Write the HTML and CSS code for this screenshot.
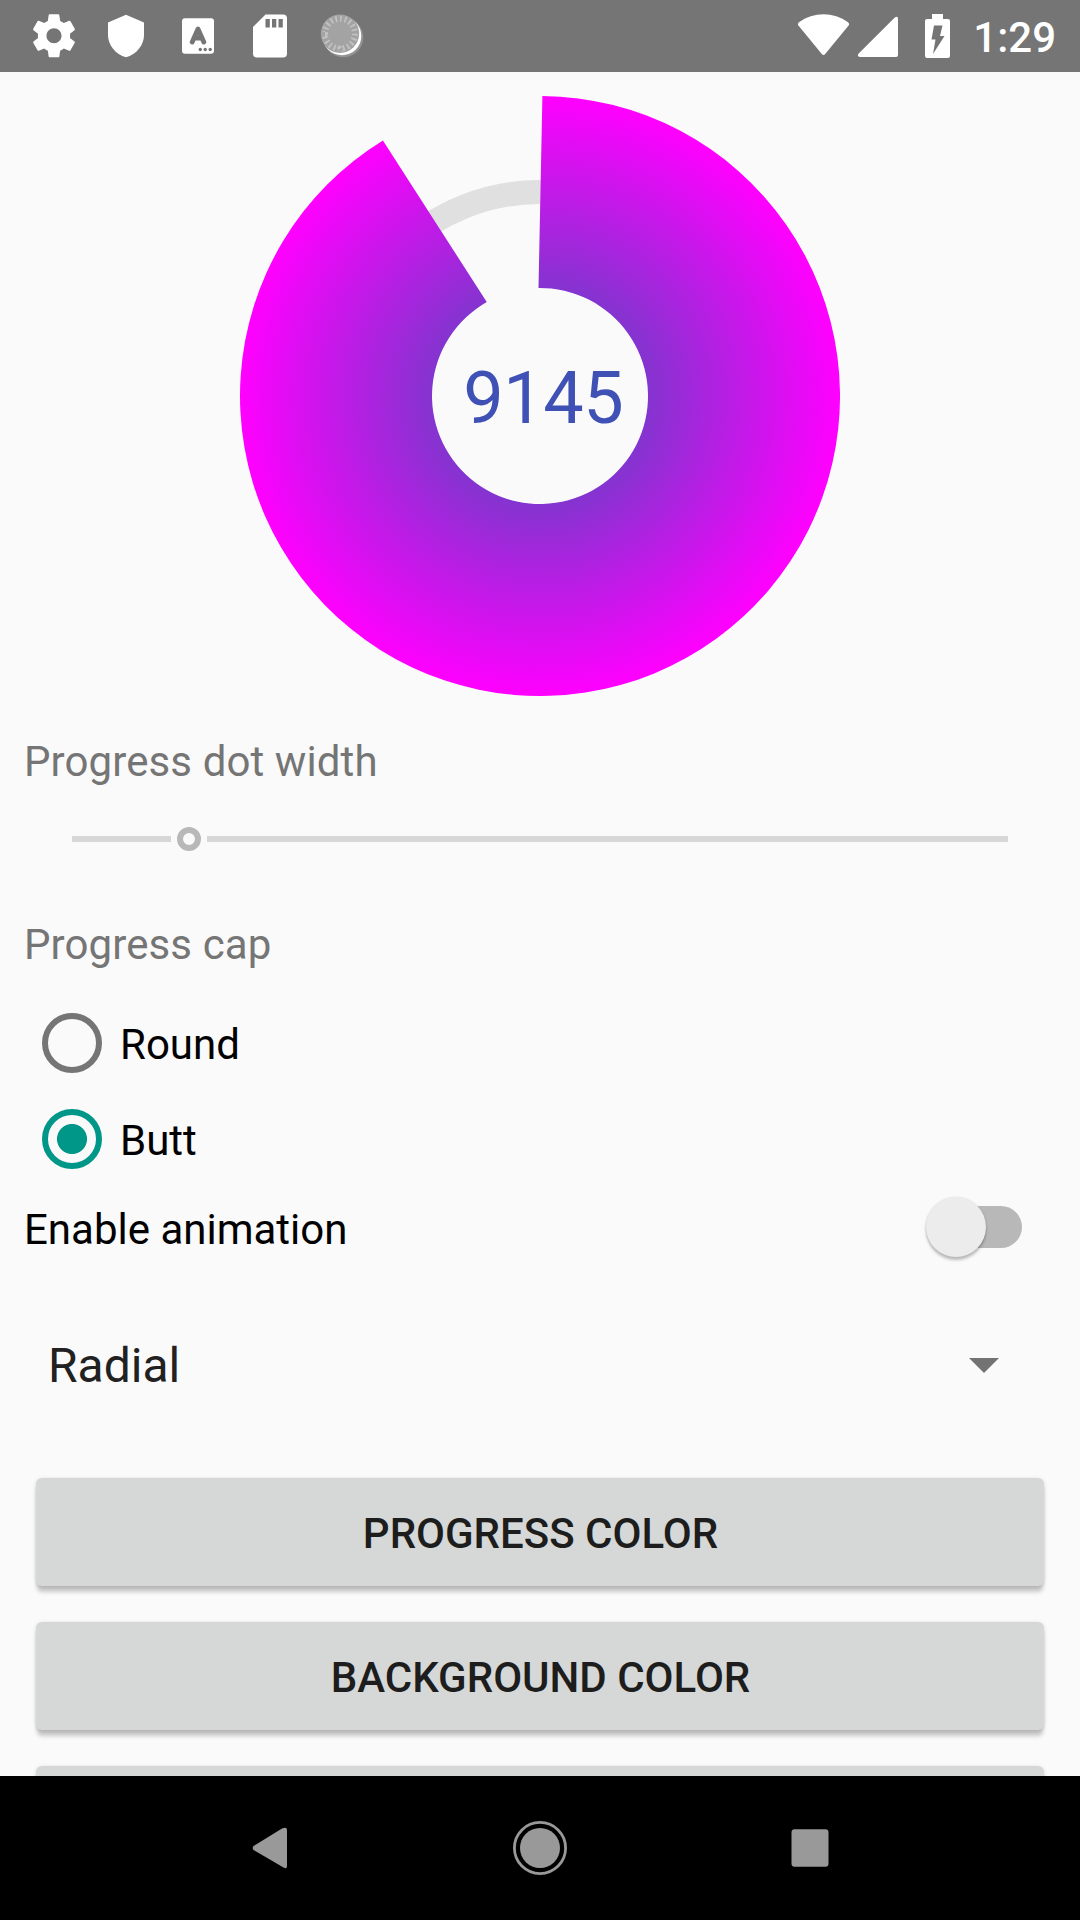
FILE: index.html
```html
<!DOCTYPE html>
<html lang="en">
<head>
<meta charset="utf-8">
<title>Circular progress</title>
<link rel="stylesheet" href="styles.css">
</head>
<body>
<div class="screen">
  <header class="status">
    <svg class="status-icon" viewBox="0 0 72 72"><path transform="translate(10.2 10) scale(2.15)" d="M19.43 12.98c.04-.32.07-.64.07-.98s-.03-.66-.07-.98l2.11-1.65c.19-.15.24-.42.12-.64l-2-3.46c-.12-.22-.39-.3-.61-.22l-2.49 1c-.52-.4-1.08-.73-1.69-.98l-.38-2.65C14.46 2.18 14.25 2 14 2h-4c-.25 0-.46.18-.49.42l-.38 2.65c-.61.25-1.17.59-1.69.98l-2.49-1c-.23-.09-.49 0-.61.22l-2 3.46c-.13.22-.07.49.12.64l2.11 1.65c-.04.32-.07.65-.07.98s.03.66.07.98l-2.11 1.65c-.19.15-.24.42-.12.64l2 3.46c.12.22.39.3.61.22l2.49-1c.52.4 1.08.73 1.69.98l.38 2.65c.03.24.24.42.49.42h4c.25 0 .46-.18.49-.42l.38-2.65c.61-.25 1.17-.59 1.69-.98l2.49 1c.23.09.49 0 .61-.22l2-3.46c.12-.22.07-.49-.12-.64l-2.11-1.65zM12 15.5c-1.930 0-3.500-1.570-3.500-3.500s1.570-3.500 3.500-3.500 3.500 1.570 3.500 3.500-1.570 3.500-3.500 3.500z"/></svg>
    <svg class="status-icon" viewBox="0 0 72 72"><path d="M36 14.700 54 22.500V35c0 10-7.500 19.500-18 22.300C25.500 54.500 18 45 18 35V22.500Z"/></svg>
    <svg class="status-icon" viewBox="0 0 72 72"><rect x="20" y="18.300" width="32" height="35.500" rx="3"/><path class="cut-line" d="M30.200 42 36 29 41.800 42M32.500 38H39.500"/><g class="cut"><circle cx="38.300" cy="49.500" r="1.700"/><circle cx="43.200" cy="49.500" r="1.700"/><circle cx="48.200" cy="49.500" r="1.700"/></g></svg>
    <svg class="status-icon" viewBox="0 0 72 72"><path d="M31.500 14.500H49a4 4 0 0 1 4 4V53.500a4 4 0 0 1-4 4H23a4 4 0 0 1-4-4V27Z"/><path class="cut" d="M31.500 19h4.300v8.500h-4.300zM38 19h4.300v8.500H38zM44.500 19h4.300v8.500h-4.300z"/></svg>
    <svg class="status-icon" viewBox="0 0 72 72"><circle cx="37.300" cy="37.300" r="20" fill="#939393"/><circle cx="36" cy="36" r="19.300" fill="#fff"/><circle cx="34" cy="33.700" r="19.200" fill="#a3a3a3"/><circle class="ticks" cx="34" cy="33.700" r="15" pathLength="80"/></svg>
    <span class="spacer"></span>
    <svg class="signals" viewBox="790 0 170 72"><path d="M798.400 25.500C797.600 24.500 797.900 23.200 799 22.300 806 17 815 14.200 823.500 14.200S841 17 848 22.300C849.100 23.200 849.400 24.500 848.600 25.500L825.200 54Q823.500 56 821.800 54Z"/><path d="M858.700 53.500 894.500 17.700Q898 15.500 898 19V55Q898 57 896 57H860Q856.500 56.500 858.700 53.500Z"/><path d="M932 14h11v5h5a2 2 0 0 1 2 2v35a2 2 0 0 1-2 2h-21a2 2 0 0 1-2-2V21a2 2 0 0 1 2-2h5z"/><path class="cut" d="M934 25.500h8.500L940 36h4.500L933 54l2.500-14.500H931.500z"/></svg>
    <span class="clock">1:29</span>
  </header>

  <main class="content">
    <svg class="gauge" viewBox="0 0 600 600">
      <defs><radialGradient id="ring" gradientUnits="userSpaceOnUse" cx="300" cy="300" r="300"><stop offset="0" stop-color="#3f51b5"/><stop offset="1" stop-color="#f0f"/></radialGradient></defs>
      <circle class="gauge-track" cx="300" cy="300" r="204"/>
      <path fill="url(#ring)" d="M302.400 .01A300 300 0 1 1 142.910 44.420L246.750 206.050A108 108 0 1 0 298.500 192.010Z"/>
      <text class="gauge-value" x="303.300" y="327">9145</text>
    </svg>

    <div class="label label-width">Progress dot width</div>
    <div class="slider"><span class="slider-done"></span><span class="slider-thumb"></span><span class="slider-rest"></span></div>
    <div class="label">Progress cap</div>
    <div class="radios">
      <div class="radio"><span class="dot"></span><span class="radio-text">Round</span></div>
      <div class="radio"><span class="dot dot-on"></span><span class="radio-text">Butt</span></div>
    </div>
    <div class="toggle-row"><span class="toggle-text">Enable animation</span><span class="toggle"><span class="knob"></span></span></div>
    <div class="select"><span>Radial</span><svg class="caret" viewBox="0 0 30 15"><path d="M0 0H30L15 15Z"/></svg></div>
    <div class="buttons">
      <button class="btn">PROGRESS COLOR</button>
      <button class="btn">BACKGROUND COLOR</button>
      <button class="btn"></button>
    </div>
  </main>

  <nav class="nav">
    <svg class="nav-icon" viewBox="0 0 60 60"><path d="M13.600 28 42 10.600Q47 8.500 47 12V48Q47 51.500 43.500 49.400L13.600 32Q11.800 30 13.600 28Z"/></svg>
    <svg class="nav-icon" viewBox="0 0 60 60"><circle cx="30" cy="30" r="20"/><circle class="nav-ring" cx="30" cy="30" r="25.600"/></svg>
    <svg class="nav-icon" viewBox="0 0 60 60"><rect x="11.500" y="11.300" width="37" height="37.500" rx="3"/></svg>
  </nav>
</div>
</body>
</html>
```
FILE: styles.css
```css
* { box-sizing: border-box; }
body { margin: 0; background: #fafafa; font-family: Roboto, "Liberation Sans", sans-serif; font-size: 42px; color: #000; }
.screen { width: 1080px; height: 1920px; display: flex; flex-direction: column; overflow: hidden; }

.status { height: 72px; flex: none; display: flex; align-items: center; padding: 0 24px 0 18px; background: #757575; }
.status-icon { width: 72px; height: 72px; fill: #fff; }
.status .cut { fill: #757575; }
.cut-line { fill: none; stroke: #757575; stroke-width: 4.800; stroke-linecap: round; stroke-linejoin: round; }
.ticks { fill: none; stroke: #c2c2c2; stroke-width: 6; stroke-dasharray: 1.500 2.500; }
.spacer { flex: 1; }
.signals { width: 170px; height: 72px; fill: #fff; }
.clock { margin-left: 13px; padding-top: 3px; color: #fff; font-weight: 500; line-height: 74px; }

.content { flex: 1; min-height: 0; overflow: hidden; display: flex; flex-direction: column; padding-top: 24px; }
.gauge { width: 600px; height: 600px; flex: none; align-self: center; }
.gauge-track { fill: none; stroke: #e0e0e0; stroke-width: 24; }
.gauge-value { fill: #3f51b5; font-size: 72px; letter-spacing: -.4px; text-anchor: middle; }

.label { flex: none; height: 56px; padding-left: 24px; line-height: 56px; letter-spacing: .1px; color: #757575; }
.label-width { margin-top: 38px; }
.slider { flex: none; height: 127px; padding: 0 72px 29px; display: flex; align-items: center; }
.slider-done, .slider-rest { height: 6px; background: #d7d7d7; }
.slider-done { width: 99px; }
.slider-rest { flex: 1; }
.slider-thumb { width: 24px; height: 24px; margin: 0 6px; border: 6px solid #b8b8b8; border-radius: 50%; }
.radios { flex: none; padding: 22px 0 0 42px; }
.radio { height: 96px; display: flex; align-items: center; gap: 18px; }
.radio-text { padding-top: 3px; }
.dot { width: 60px; height: 60px; border: 6px solid #757575; border-radius: 50%; }
.dot-on { border-color: #009688; background: radial-gradient(circle, #009688 14.600px, transparent 15.400px); }
.toggle-row { flex: none; height: 80px; padding: 0 58px 0 24px; display: flex; align-items: center; justify-content: space-between; }
.toggle-text { padding-top: 4px; }
.toggle { width: 84px; height: 42px; border-radius: 21px; background: #b8b8b8; display: flex; align-items: center; }
.knob { width: 60px; height: 60px; flex: none; margin-left: -12px; border-radius: 50%; background: #ececec; box-shadow: 0 3px 3px rgba(0,0,0,.25), 0 0 2px rgba(0,0,0,.1); }
.select { flex: none; height: 194px; margin-top: 1px; padding: 0 81px 0 48px; display: flex; align-items: center; justify-content: space-between; font-size: 48px; color: #212121; }
.caret { width: 30px; height: 15px; fill: #737373; }
.buttons { flex: none; display: flex; flex-direction: column; gap: 36px; padding: 16px 36px 0; }
.btn { height: 108px; padding: 2px 0 0 1px; border: 0; border-radius: 6px; background: #d6d8d7; color: #1d1d1d; font: 500 42px Roboto, "Liberation Sans", sans-serif; box-shadow: 0 7px 4px -1px rgba(0,0,0,.2), 0 1px 4px rgba(0,0,0,.14); }

.nav { height: 144px; flex: none; background: #000; display: flex; justify-content: center; align-items: center; gap: 210px; }
.nav-icon { width: 60px; height: 60px; fill: #999; }
.nav-ring { fill: none; stroke: #999; stroke-width: 2.800; }
```
